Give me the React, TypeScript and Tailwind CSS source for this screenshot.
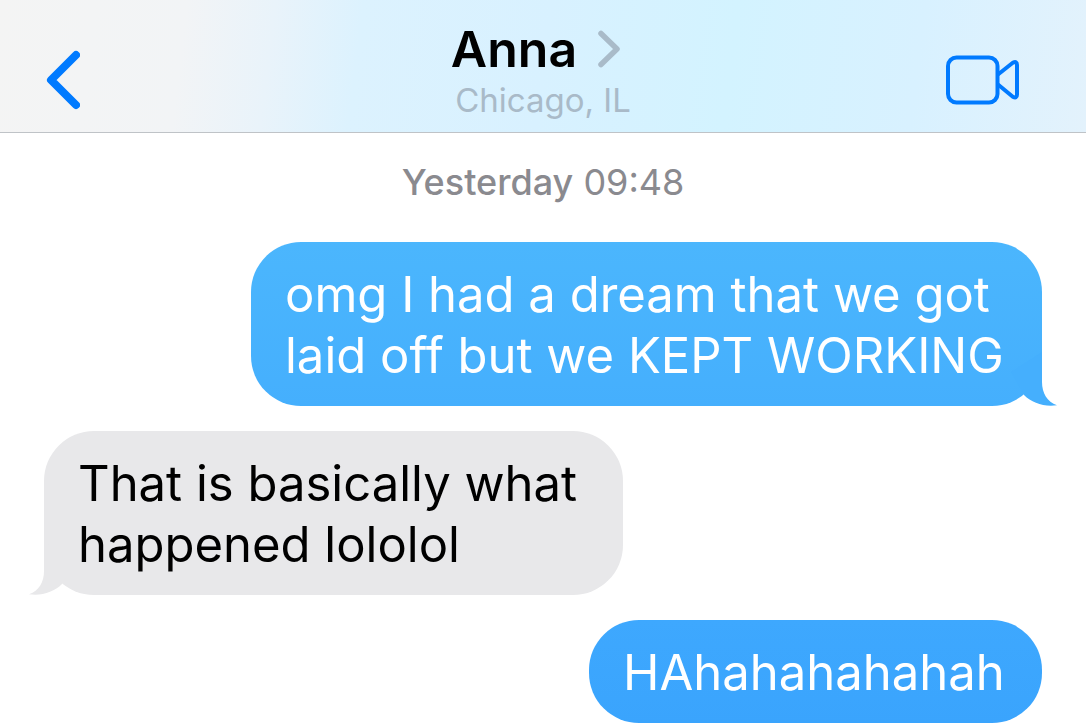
import * as React from "react"

interface Message {
  id: number
  from: "me" | "them"
  lines: string[]
  tail: boolean
  // fill and width of the bubble; sent ones get bluer further down the screen
  className: string
  tailClassName: string
}

const messages: Message[] = [
  {
    id: 1,
    from: "me",
    lines: ["omg I had a dream that we got", "laid off but we KEPT WORKING"],
    tail: true,
    className: "w-[791px] bg-linear-to-b from-[#4bb6fd] to-[#45affd] text-white",
    tailClassName: "text-[#45affd]",
  },
  {
    id: 2,
    from: "them",
    lines: ["That is basically what", "happened lololol"],
    tail: true,
    className: "w-[579px] bg-[#e8e8ea] text-black",
    tailClassName: "text-[#e8e8ea]",
  },
  {
    id: 3,
    from: "me",
    lines: ["HAhahahahahah"],
    tail: false,
    className: "w-[453px] bg-linear-to-b from-[#3ea8fe] to-[#3aa4fd] text-white",
    tailClassName: "",
  },
]

function BackIcon() {
  return (
    <svg width="34" height="60" viewBox="0 0 34 60" fill="none" aria-hidden="true">
      <path
        d="M30 5L5 30L30 55"
        stroke="#007aff"
        strokeWidth="8"
        strokeLinecap="round"
        strokeLinejoin="round"
      />
    </svg>
  )
}

function DisclosureIcon() {
  return (
    <svg width="24" height="38" viewBox="0 0 24 38" fill="none" aria-hidden="true">
      <path
        d="M4 3.5L20 19L4 34.5"
        stroke="#a9bbc9"
        strokeWidth="5.5"
        strokeLinecap="round"
        strokeLinejoin="round"
      />
    </svg>
  )
}

function VideoIcon() {
  return (
    <svg width="74" height="50" viewBox="0 0 74 50" fill="none" aria-hidden="true">
      <rect x="2" y="2.5" width="49.5" height="45" rx="8.5" stroke="#007aff" strokeWidth="4" />
      <path
        d="M52 19.5L66.8 7.8Q71 5.5 71 10V39.5Q71 44 66.8 41.7L52 29.5"
        stroke="#007aff"
        strokeWidth="4"
        strokeLinejoin="round"
      />
    </svg>
  )
}

function Tail({ from, className }: { from: Message["from"]; className: string }) {
  const side = from === "me" ? "-right-[15px]" : "-left-[15px] -scale-x-100"
  return (
    <svg
      width="66"
      height="54"
      viewBox="0 0 66 54"
      aria-hidden="true"
      className={`absolute bottom-0 ${side} ${className}`}
    >
      <path d="M51 0V30C51 41 56 50 66 53.2C53 55 41 51 33 43L20 20Z" fill="currentColor" />
    </svg>
  )
}

function Bubble({ message }: { message: Message }) {
  const { from, lines, tail, className, tailClassName } = message
  return (
    <li className={`flex ${from === "me" ? "justify-end" : "justify-start"}`}>
      <div
        className={`relative max-w-full rounded-[50px] px-[34px] pt-[22px] pb-5 text-[49px] leading-[61px] ${className}`}
      >
        {tail && <Tail from={from} className={tailClassName} />}
        <p className="relative whitespace-nowrap">
          {lines.map((line, i) => (
            <React.Fragment key={line}>
              {i > 0 && <br />}
              {line}
            </React.Fragment>
          ))}
        </p>
      </div>
    </li>
  )
}

export default function App() {
  return (
    <div className="min-h-screen overflow-hidden bg-white font-['Inter',sans-serif]">
      <header className="grid grid-cols-[1fr_auto_1fr] items-center border-b border-[#bfc3c7] bg-[linear-gradient(97deg,#f4f4f4_0%,#f2f4f6_17%,#e9f3fa_25%,#dcf2fe_33%,#d8f1ff_50%,#d3f3ff_67%,#d8f1ff_84%,#e3f2fc_100%)] pt-[21px] pb-[9px]">
        <button type="button" aria-label="Back" className="mt-4 ml-[46px] justify-self-start">
          <BackIcon />
        </button>
        <button type="button" className="flex flex-col items-center">
          <span className="flex items-center gap-5 pr-[14px]">
            <span className="text-[50px] leading-[56px] font-semibold text-black">Anna</span>
            <DisclosureIcon />
          </span>
          <span className="text-[33px] leading-[46px] text-[#a9bac8]">Chicago, IL</span>
        </button>
        <button type="button" aria-label="Video call" className="mt-4 mr-[66px] justify-self-end">
          <VideoIcon />
        </button>
      </header>

      <main className="px-11 pt-7">
        <p className="text-center text-[36px] leading-[42px] text-[#8a8a8f]">
          <span className="font-medium">Yesterday</span> 09:48
        </p>
        <ul className="mt-[39px] flex flex-col gap-[25px]">
          {messages.map((message) => (
            <Bubble key={message.id} message={message} />
          ))}
        </ul>
      </main>
    </div>
  )
}
